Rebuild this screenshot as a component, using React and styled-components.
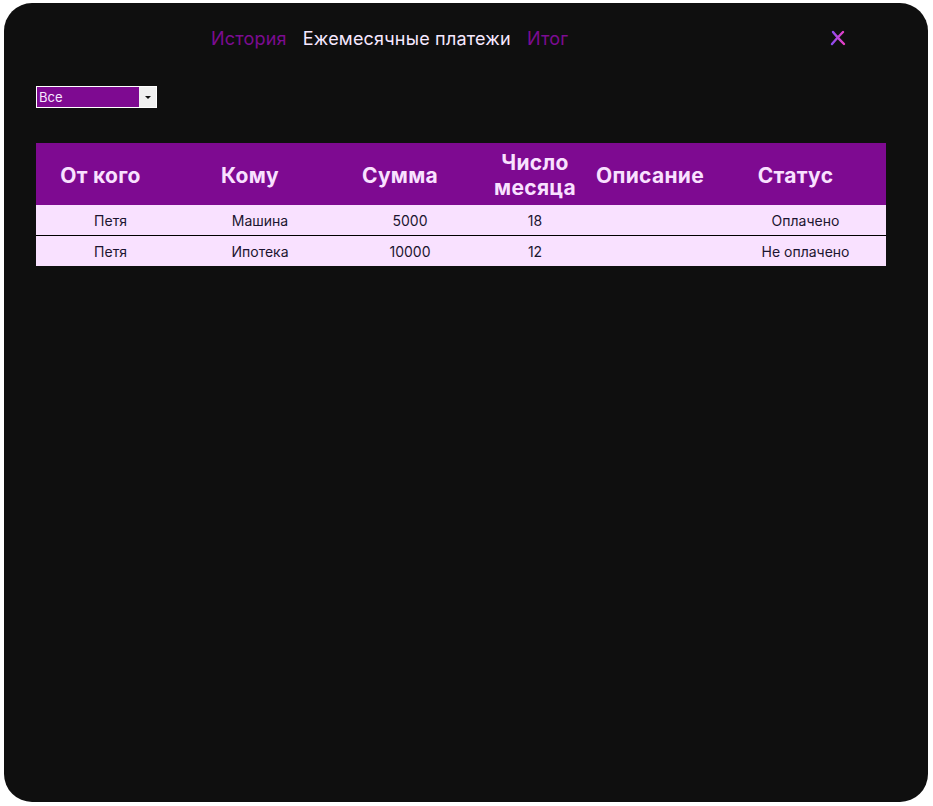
import React from "react";
import styled, { createGlobalStyle } from "styled-components";

const Global = createGlobalStyle`
  body {
    margin: 0;
    background: #ffffff;
    font-family: Inter, "Liberation Sans", Arial, sans-serif;
  }
`;

const Page = styled.div`
  padding: 3px 5px 4px 4px;
`;

const Panel = styled.div`
  box-sizing: border-box;
  width: 924px;
  height: 799px;
  background: #0f0f0f;
  border-radius: 28px;
  padding: 0 42px 0 32px;
`;

const Header = styled.div`
  display: flex;
  align-items: center;
  height: 70px;
  padding-left: 175px;
`;

const Nav = styled.nav`
  display: flex;
  gap: 16px;
`;

const NavItem = styled.a`
  font-size: 18px;
  letter-spacing: 0.2px;
  color: ${(p) => (p.active ? "#f6e8ff" : "#7c0c91")};
  text-decoration: none;
  cursor: pointer;
`;

const Close = styled.button`
  margin-left: auto;
  margin-right: 40px;
  background: none;
  border: none;
  padding: 0;
  width: 16px;
  height: 16px;
  display: flex;
  cursor: pointer;
`;

const Filter = styled.div`
  display: flex;
  width: 121px;
  height: 22px;
  box-sizing: border-box;
  border: 1px solid #ffffff;
  margin-top: 13px;
`;

const Select = styled.select`
  appearance: none;
  flex: 1;
  border: none;
  outline: none;
  background: #7e0a91;
  color: #f6e8ff;
  font-family: Inter, "Liberation Sans", Arial, sans-serif;
  font-size: 13px;
  padding: 0 2px;
  margin: 0;
`;

const Arrow = styled.div`
  width: 17px;
  background: #f0f0f0;
  display: flex;
  align-items: center;
  justify-content: center;
  &::after {
    content: "";
    border-left: 3px solid transparent;
    border-right: 3px solid transparent;
    border-top: 3px solid #111;
  }
`;

const Table = styled.div`
  margin-top: 35px;
  display: grid;
  grid-template-columns: 149px 150px 150px 100px 140px 161px;
`;

const HeadCell = styled.div`
  box-sizing: border-box;
  height: 62px;
  padding-top: 2px;
  background: #7e0a91;
  color: #f9e1ff;
  font-weight: bold;
  font-size: 21px;
  letter-spacing: 0.3px;
  line-height: 25px;
  display: flex;
  align-items: center;
  justify-content: center;
  text-align: center;
  padding-right: ${(p) => p.shift * 2}px;
`;

const Cell = styled.div`
  box-sizing: border-box;
  height: ${(p) => (p.divided ? 31 : 30)}px;
  background: #f9e1ff;
  color: #1c1530;
  font-size: 14px;
  display: flex;
  align-items: center;
  justify-content: center;
  border-top: ${(p) => (p.divided ? "1px solid #000" : "none")};
`;

const columns = [
  { title: "От кого", shift: 10 },
  { title: "Кому", shift: 10 },
  { title: "Сумма", shift: 10 },
  { title: "Число месяца", shift: 0 },
  { title: "Описание", shift: 5 },
  { title: "Статус", shift: 10 },
];

const rows = [
  ["Петя", "Машина", "5000", "18", "", "Оплачено"],
  ["Петя", "Ипотека", "10000", "12", "", "Не оплачено"],
];

const CloseIcon = () => (
  <svg width="16" height="16" viewBox="0 0 16 16">
    <defs>
      <linearGradient id="xg" x1="0" y1="0" x2="1" y2="0">
        <stop offset="0" stopColor="#8a4cf0" />
        <stop offset="1" stopColor="#ec3fc6" />
      </linearGradient>
    </defs>
    <path
      d="M3 2 Q7 7 14 14 M13 2 Q7 8 2 14"
      stroke="url(#xg)"
      strokeWidth="2.4"
      strokeLinecap="round"
      fill="none"
    />
  </svg>
);

const App = () => (
  <Page>
    <Global />
    <Panel>
      <Header>
        <Nav>
          <NavItem>История</NavItem>
          <NavItem active>Ежемесячные платежи</NavItem>
          <NavItem>Итог</NavItem>
        </Nav>
        <Close aria-label="Закрыть">
          <CloseIcon />
        </Close>
      </Header>
      <Filter>
        <Select defaultValue="all">
          <option value="all">Все</option>
          <option value="paid">Оплачено</option>
          <option value="unpaid">Не оплачено</option>
        </Select>
        <Arrow />
      </Filter>
      <Table>
        {columns.map((c) => (
          <HeadCell key={c.title} shift={c.shift}>
            {c.title}
          </HeadCell>
        ))}
        {rows.map((r, i) =>
          r.map((v, j) => (
            <Cell key={i + "-" + j} divided={i > 0}>
              {v}
            </Cell>
          ))
        )}
      </Table>
    </Panel>
  </Page>
);

export default App;
